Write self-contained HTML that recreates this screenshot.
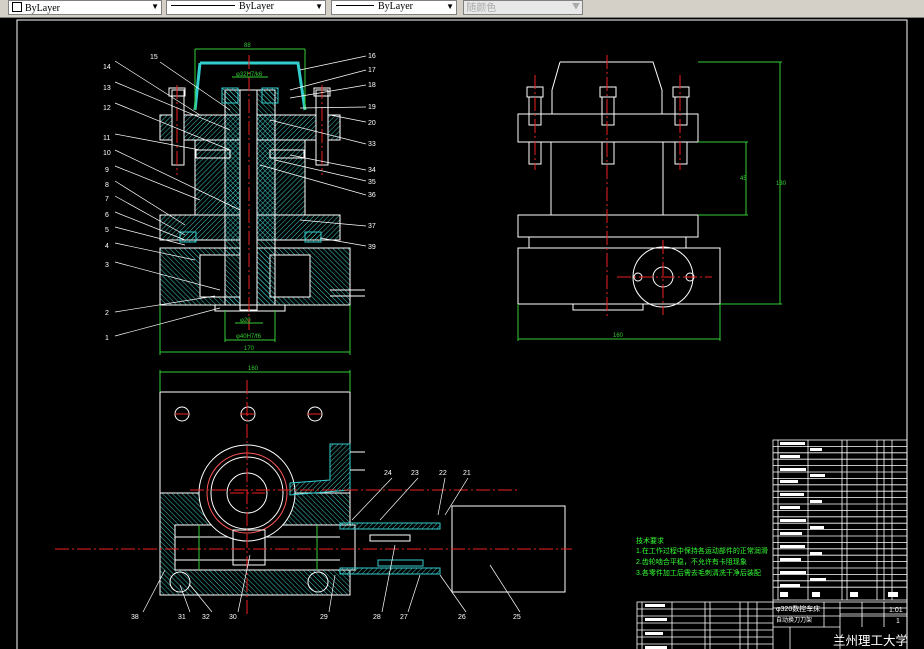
<!DOCTYPE html>
<html><head><meta charset="utf-8"><style>
html,body{margin:0;padding:0;background:#000;width:924px;height:649px;overflow:hidden}
.tb{position:absolute;left:0;top:0;width:924px;height:17px;background:#d4d0c8;border-bottom:1px solid #808080}
.cb{position:absolute;top:0;height:13px;background:#fff;border:1px solid #808080;font:10px "Liberation Serif",serif;line-height:12px;color:#000}
.ar{position:absolute;right:2px;top:0;font-size:8px}
svg{position:absolute;left:0;top:0}
text{font-family:"Liberation Sans",sans-serif}
</style></head><body>
<div class="tb">
<div class="cb" style="left:8px;width:152px"><span style="display:inline-block;width:8px;height:8px;border:1px solid #000;margin:1px 3px 0 3px;vertical-align:-1px"></span>ByLayer<span class="ar">▼</span></div>
<div class="cb" style="left:166px;width:158px"><span style="display:inline-block;width:64px;border-top:1px solid #000;margin:0 4px;vertical-align:3px"></span>ByLayer<span class="ar">▼</span></div>
<div class="cb" style="left:331px;width:124px"><span style="display:inline-block;width:38px;border-top:1px solid #000;margin:0 4px;vertical-align:3px"></span>ByLayer<span class="ar">▼</span></div>
<div class="cb" style="left:463px;width:118px;background:#e8e8e8;color:#aaa;font-family:'Noto Sans CJK SC',sans-serif">&nbsp;随颜色<span class="ar">▼</span></div>
</div>
<svg width="924" height="649" viewBox="0 0 924 649">
<defs>
<pattern id="h" width="3.5" height="3.5" patternUnits="userSpaceOnUse" patternTransform="rotate(45)"><line x1="0" y1="0" x2="0" y2="3.5" stroke="#4dd" stroke-width="0.9"/></pattern>
<pattern id="h2" width="3.5" height="3.5" patternUnits="userSpaceOnUse" patternTransform="rotate(-45)"><line x1="0" y1="0" x2="0" y2="3.5" stroke="#4dd" stroke-width="0.9"/></pattern>
</defs>
<rect x="17" y="20" width="890" height="640" fill="none" stroke="#fff" stroke-width="1"/>
<g fill="none" stroke="#fff" stroke-width="1">
<path d="M200 63 L298 63 L305 110 M200 63 L195 110" stroke="#3cc" stroke-width="3"/>
<rect x="160" y="115" width="180" height="25" fill="url(#h)"/>
<rect x="195" y="140" width="110" height="75" fill="url(#h)"/>
<rect x="160" y="215" width="180" height="25" fill="url(#h)"/>
<rect x="160" y="248" width="190" height="57" fill="url(#h2)"/>
<rect x="200" y="255" width="40" height="42" fill="#000"/>
<rect x="270" y="255" width="40" height="42" fill="#000"/>
<rect x="225" y="90" width="50" height="215" fill="url(#h2)"/>
<rect x="240" y="90" width="17" height="220" fill="#000"/>
<rect x="222" y="88" width="16" height="15" fill="url(#h2)" stroke="#3cc"/>
<rect x="262" y="88" width="16" height="15" fill="url(#h2)" stroke="#3cc"/>
<rect x="172" y="90" width="12" height="75" fill="#000"/>
<rect x="169" y="88" width="16" height="8"/>
<rect x="316" y="90" width="12" height="75" fill="#000"/>
<rect x="314" y="88" width="16" height="8"/>
<rect x="215" y="305" width="70" height="6"/>
<rect x="180" y="232" width="16" height="10" stroke="#3cc" fill="url(#h)"/>
<rect x="305" y="232" width="16" height="10" stroke="#3cc" fill="url(#h)"/>
<rect x="196" y="150" width="34" height="8"/>
<rect x="270" y="150" width="34" height="8"/>
<path d="M330 290 L365 290 M330 296 L365 296"/>
<path d="M560 62 L653 62 L662 90 L662 114 M560 62 L552 90 L552 114"/>
<rect x="518" y="114" width="180" height="28"/>
<rect x="551" y="142" width="112" height="73"/>
<rect x="518" y="215" width="180" height="22"/>
<rect x="529" y="237" width="157" height="11"/>
<rect x="518" y="248" width="202" height="56"/>
<rect x="573" y="304" width="70" height="6"/>
<circle cx="663" cy="277" r="30"/>
<circle cx="663" cy="277" r="10"/>
<circle cx="638" cy="277" r="4"/><circle cx="690" cy="277" r="4"/>
<rect x="529" y="97" width="12" height="28" fill="#000"/><rect x="527" y="87" width="16" height="10"/><rect x="529" y="142" width="12" height="22"/>
<rect x="602" y="97" width="12" height="28" fill="#000"/><rect x="600" y="87" width="16" height="10"/><rect x="602" y="142" width="12" height="22"/>
<rect x="675" y="97" width="12" height="28" fill="#000"/><rect x="673" y="87" width="16" height="10"/><rect x="675" y="142" width="12" height="22"/>
<rect x="518" y="114" width="180" height="28"/>
<rect x="160" y="392" width="190" height="101"/>
<rect x="160" y="493" width="190" height="102" fill="url(#h2)"/>
<rect x="175" y="525" width="180" height="45" fill="#000"/>
<path d="M175 537 H340 M175 560 H340"/>
<circle cx="247" cy="493" r="48" fill="#000"/>
<circle cx="247" cy="493" r="40" stroke="#f55"/>
<circle cx="247" cy="493" r="36"/>
<circle cx="247" cy="493" r="20"/>
<circle cx="182" cy="414" r="7"/><circle cx="248" cy="414" r="7"/><circle cx="315" cy="414" r="7"/>
<rect x="233" y="530" width="32" height="35"/>
<path d="M330 444 L350 444 L350 490 L290 495 L290 483 L330 480 Z" stroke="#3cc" fill="url(#h)"/>
<path d="M350 452 L365 452 M350 470 L365 470"/>
<rect x="340" y="523" width="100" height="6" stroke="#3cc" fill="url(#h)"/>
<rect x="340" y="568" width="100" height="6" stroke="#3cc" fill="url(#h)"/>
<rect x="370" y="535" width="40" height="6"/><rect x="378" y="560" width="45" height="6" stroke="#3cc"/>
<rect x="452" y="506" width="113" height="86"/>
<circle cx="180" cy="582" r="10"/><circle cx="318" cy="582" r="10"/>
</g>
<g stroke="#e22" stroke-width="1" stroke-dasharray="14 3 2 3">
<path d="M249 55 V330 M177 85 V175 M322 85 V175 M607 55 V318 M535 75 V170 M680 75 V170 M663 240 V315 M617 277 H712 M247 380 V615 M55 549 H572 M175 414 H190 M240 414 H256 M307 414 H323 M230 493 H265 M190 490 H520"/>
</g>
<g stroke="#3c3" stroke-width="1" fill="none">
<path d="M195 49 H305 M195 49 V110 M305 49 V110 M160 352 H350 M160 305 V355 M350 305 V355 M235 323 H263 M225 340 H275 M225 310 V342 M275 310 V342 M232 77 H268 M698 62 H782 M780 62 V304 M720 304 H782 M698 142 H748 M746 142 V215 M698 215 H748 M518 304 V341 M720 304 V341 M518 339 H720 M160 372 H350 M160 370 V392 M350 370 V392 M199 525 V570 M317 525 V570"/>
</g>
<g fill="#3c3" font-size="6">
<text x="244" y="47">88</text><text x="244" y="350">170</text><text x="240" y="322">φ20</text><text x="236" y="338">φ40H7/f6</text><text x="236" y="76">φ32H7/k6</text>
<text x="776" y="185">130</text><text x="740" y="180">45</text><text x="613" y="337">160</text><text x="248" y="370">160</text>
</g>
<g fill="#fff" font-size="7" stroke="none">
<text x="150" y="59">15</text><text x="103" y="69">14</text><text x="103" y="90">13</text><text x="103" y="110">12</text><text x="103" y="140">11</text><text x="103" y="155">10</text><text x="105" y="172">9</text><text x="105" y="187">8</text><text x="105" y="201">7</text><text x="105" y="217">6</text><text x="105" y="232">5</text><text x="105" y="248">4</text><text x="105" y="267">3</text><text x="105" y="315">2</text><text x="105" y="340">1</text>
<text x="368" y="58">16</text><text x="368" y="72">17</text><text x="368" y="87">18</text><text x="368" y="109">19</text><text x="368" y="125">20</text><text x="368" y="146">33</text><text x="368" y="172">34</text><text x="368" y="184">35</text><text x="368" y="197">36</text><text x="368" y="228">37</text><text x="368" y="249">39</text>
<text x="131" y="619">38</text><text x="178" y="619">31</text><text x="202" y="619">32</text><text x="229" y="619">30</text><text x="320" y="619">29</text><text x="373" y="619">28</text><text x="400" y="619">27</text><text x="458" y="619">26</text><text x="513" y="619">25</text>
<text x="384" y="475">24</text><text x="411" y="475">23</text><text x="439" y="475">22</text><text x="463" y="475">21</text>
</g>
<g stroke="#fff" stroke-width="0.7" fill="none">
<path d="M115 61 L200 115 M115 82 L230 130 M115 103 L230 150 M115 134 L200 150 M115 150 L240 210 M115 166 L200 200 M115 181 L185 225 M115 196 L185 235 M115 212 L185 240 M115 227 L185 245 M115 243 L195 260 M115 262 L220 290 M115 312 L215 296 M115 336 L220 308 M160 62 L230 110 M300 70 L366 56 M290 90 L366 70 M290 98 L366 85 M300 108 L366 107 M330 115 L366 122 M270 120 L366 144 M290 155 L366 170 M275 160 L366 181 M260 165 L366 195 M300 220 L366 226 M320 238 L366 246 M143 612 L165 570 M190 612 L180 585 M212 612 L190 585 M238 612 L250 555 M329 612 L335 575 M382 612 L395 545 M408 612 L420 575 M466 612 L440 575 M520 612 L490 565 M392 478 L352 520 M418 478 L380 520 M445 478 L438 515 M468 478 L445 515"/>
</g>
<g fill="#3f3" font-family="'Liberation Sans','Noto Sans CJK SC',sans-serif" font-size="7">
<text x="636" y="543">技术要求</text>
<text x="636" y="553">1.在工作过程中保持各运动部件的正常润滑</text>
<text x="636" y="564">2.齿轮啮合平稳，不允许有卡阻现象</text>
<text x="636" y="575">3.各零件加工后需去毛刺清洗干净后装配</text>
</g>
<g stroke="#fff" stroke-width="0.8" fill="none">
<rect x="773" y="440" width="134" height="168"/>
<path d="M778 440 V600 M808 440 V600 M842 440 V600 M847 440 V600 M877 440 V600 M884 440 V600 M892 440 V600"/>
<path d="M773 446.4 H907 M773 452.8 H907 M773 459.2 H907 M773 465.6 H907 M773 472 H907 M773 478.4 H907 M773 484.8 H907 M773 491.2 H907 M773 497.6 H907 M773 504 H907 M773 510.4 H907 M773 516.8 H907 M773 523.2 H907 M773 529.6 H907 M773 536 H907 M773 542.4 H907 M773 548.8 H907 M773 555.2 H907 M773 561.6 H907 M773 568 H907 M773 574.4 H907 M773 580.8 H907 M773 587.2 H907 M773 600 H907"/>
<rect x="637" y="602" width="270" height="50"/>
<path d="M637 609 H773 M637 616 H773 M637 623 H773 M637 630 H773 M637 637 H773 M637 644 H773 M642 602 V649 M672 602 V649 M705 602 V649 M710 602 V649 M740 602 V649 M748 602 V649 M757 602 V649 M773 602 V649 M773 616 H907 M773 627 H840 M790 627 V649 M824 602 V627 M840 602 V649 M862 602 V627 M884 602 V627 M840 614 H907"/>
</g>
<g fill="#fff">
<rect x="780" y="442" width="25" height="3"/><rect x="780" y="455" width="20" height="3"/><rect x="780" y="468" width="26" height="3"/><rect x="780" y="480" width="18" height="3"/><rect x="780" y="493" width="24" height="3"/><rect x="780" y="506" width="20" height="3"/><rect x="780" y="519" width="26" height="3"/><rect x="780" y="532" width="22" height="3"/><rect x="780" y="545" width="25" height="3"/><rect x="780" y="558" width="21" height="3"/><rect x="780" y="571" width="26" height="3"/><rect x="780" y="584" width="20" height="3"/>
<rect x="810" y="448" width="12" height="3"/><rect x="810" y="474" width="15" height="3"/><rect x="810" y="500" width="12" height="3"/><rect x="810" y="526" width="14" height="3"/><rect x="810" y="552" width="12" height="3"/><rect x="810" y="578" width="16" height="3"/>
<rect x="780" y="592" width="8" height="5"/><rect x="812" y="592" width="8" height="5"/><rect x="850" y="592" width="8" height="5"/><rect x="888" y="592" width="10" height="5"/>
<rect x="645" y="604" width="20" height="3"/><rect x="645" y="618" width="22" height="3"/><rect x="645" y="632" width="18" height="3"/><rect x="645" y="646" width="22" height="3"/>
</g>
<g fill="#fff" font-family="'Liberation Sans','Noto Sans CJK SC',sans-serif">
<text x="776" y="611" font-size="7">φ320数控车床</text>
<text x="776" y="622" font-size="6">自动换刀刀架</text>
<text x="889" y="612" font-size="7">1:01</text>
<text x="896" y="623" font-size="7">1</text>
<text x="833" y="645" font-size="12.5">兰州理工大学</text>
</g>
</svg>
</body></html>
